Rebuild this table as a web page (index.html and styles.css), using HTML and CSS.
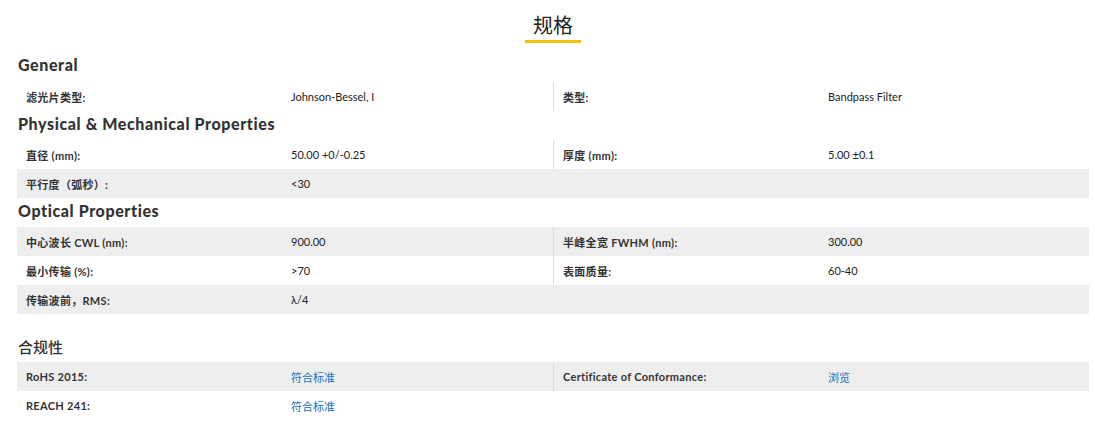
FILE: index.html
```html
<!DOCTYPE html>
<html lang="zh">
<head>
<meta charset="utf-8">
<link rel="stylesheet" href="styles.css">
</head>
<body>
<div class="spec">
  <div class="title-wrap"><h2 class="title">规格</h2></div>

  <h3 class="group first">General</h3>
  <div class="row">
    <div class="lbl">滤光片类型:</div><div class="val">Johnson-Bessel, I</div>
    <div class="lbl sep">类型:</div><div class="val">Bandpass Filter</div>
  </div>

  <h3 class="group">Physical &amp; Mechanical Properties</h3>
  <div class="row">
    <div class="lbl">直径 (mm):</div><div class="val">50.00 +0/-0.25</div>
    <div class="lbl sep">厚度 (mm):</div><div class="val">5.00 ±0.1</div>
  </div>
  <div class="row gray">
    <div class="lbl">平行度（弧秒）:</div><div class="val">&lt;30</div>
  </div>

  <h3 class="group">Optical Properties</h3>
  <div class="row gray">
    <div class="lbl">中心波长 CWL (nm):</div><div class="val">900.00</div>
    <div class="lbl sep">半峰全宽 FWHM (nm):</div><div class="val">300.00</div>
  </div>
  <div class="row">
    <div class="lbl">最小传输 (%):</div><div class="val">&gt;70</div>
    <div class="lbl sep">表面质量:</div><div class="val">60-40</div>
  </div>
  <div class="row gray">
    <div class="lbl">传输波前，RMS:</div><div class="val">λ/4</div>
  </div>

  <h3 class="compliance">合规性</h3>
  <div class="row gray">
    <div class="lbl">RoHS 2015:</div><div class="val"><a href="#">符合标准</a></div>
    <div class="lbl sep">Certificate of Conformance:</div><div class="val"><a href="#">浏览</a></div>
  </div>
  <div class="row">
    <div class="lbl">REACH 241:</div><div class="val"><a href="#">符合标准</a></div>
  </div>
</div>
</body>
</html>
```

FILE: styles.css
```css
html, body {
  margin: 0;
  padding: 0;
  background: #fff;
}
body {
  font-family: Lato, "Noto Sans CJK SC", sans-serif;
  color: #333;
}
.spec {
  width: 1072px;
  margin-left: 17px;
  padding-top: 11px;
}
.title-wrap {
  display: flex;
  justify-content: center;
}
.title {
  margin: 0;
  font-family: "Noto Sans CJK SC", sans-serif;
  font-weight: 400;
  font-size: 20px;
  line-height: 28px;
  color: #222;
  padding: 0 8px 1px;
  border-bottom: 3px solid #f5c000;
}
.group {
  margin: 0;
  font-family: Lato, "Noto Sans CJK SC", sans-serif;
  font-weight: 900;
  font-size: 16px;
  letter-spacing: 0.6px;
  line-height: 17px;
  padding: 4px 0 8px 1px;
  color: #333;
}
.group.first {
  padding-top: 13px;
  padding-bottom: 9px;
}
.compliance {
  margin: 0;
  font-family: "Noto Sans CJK SC", sans-serif;
  font-weight: 500;
  font-size: 15px;
  line-height: 20px;
  padding: 23px 0 5px 1px;
  color: #333;
}
.row {
  display: grid;
  grid-template-columns: 265px 271px 266px 270px;
  height: 29px;
  align-items: stretch;
  font-size: 11px;
}
.row.gray {
  background: #eeeeee;
}
.lbl, .val {
  display: flex;
  align-items: center;
  padding-left: 9px;
}
.lbl {
  font-weight: 700;
  letter-spacing: 0.3px;
  color: #333;
}
.val {
  font-weight: 400;
  color: #222;
}
.sep {
  border-left: 1px solid #dcdcdc;
}
.val a {
  color: #1a6fc4;
  text-decoration: none;
}
```
